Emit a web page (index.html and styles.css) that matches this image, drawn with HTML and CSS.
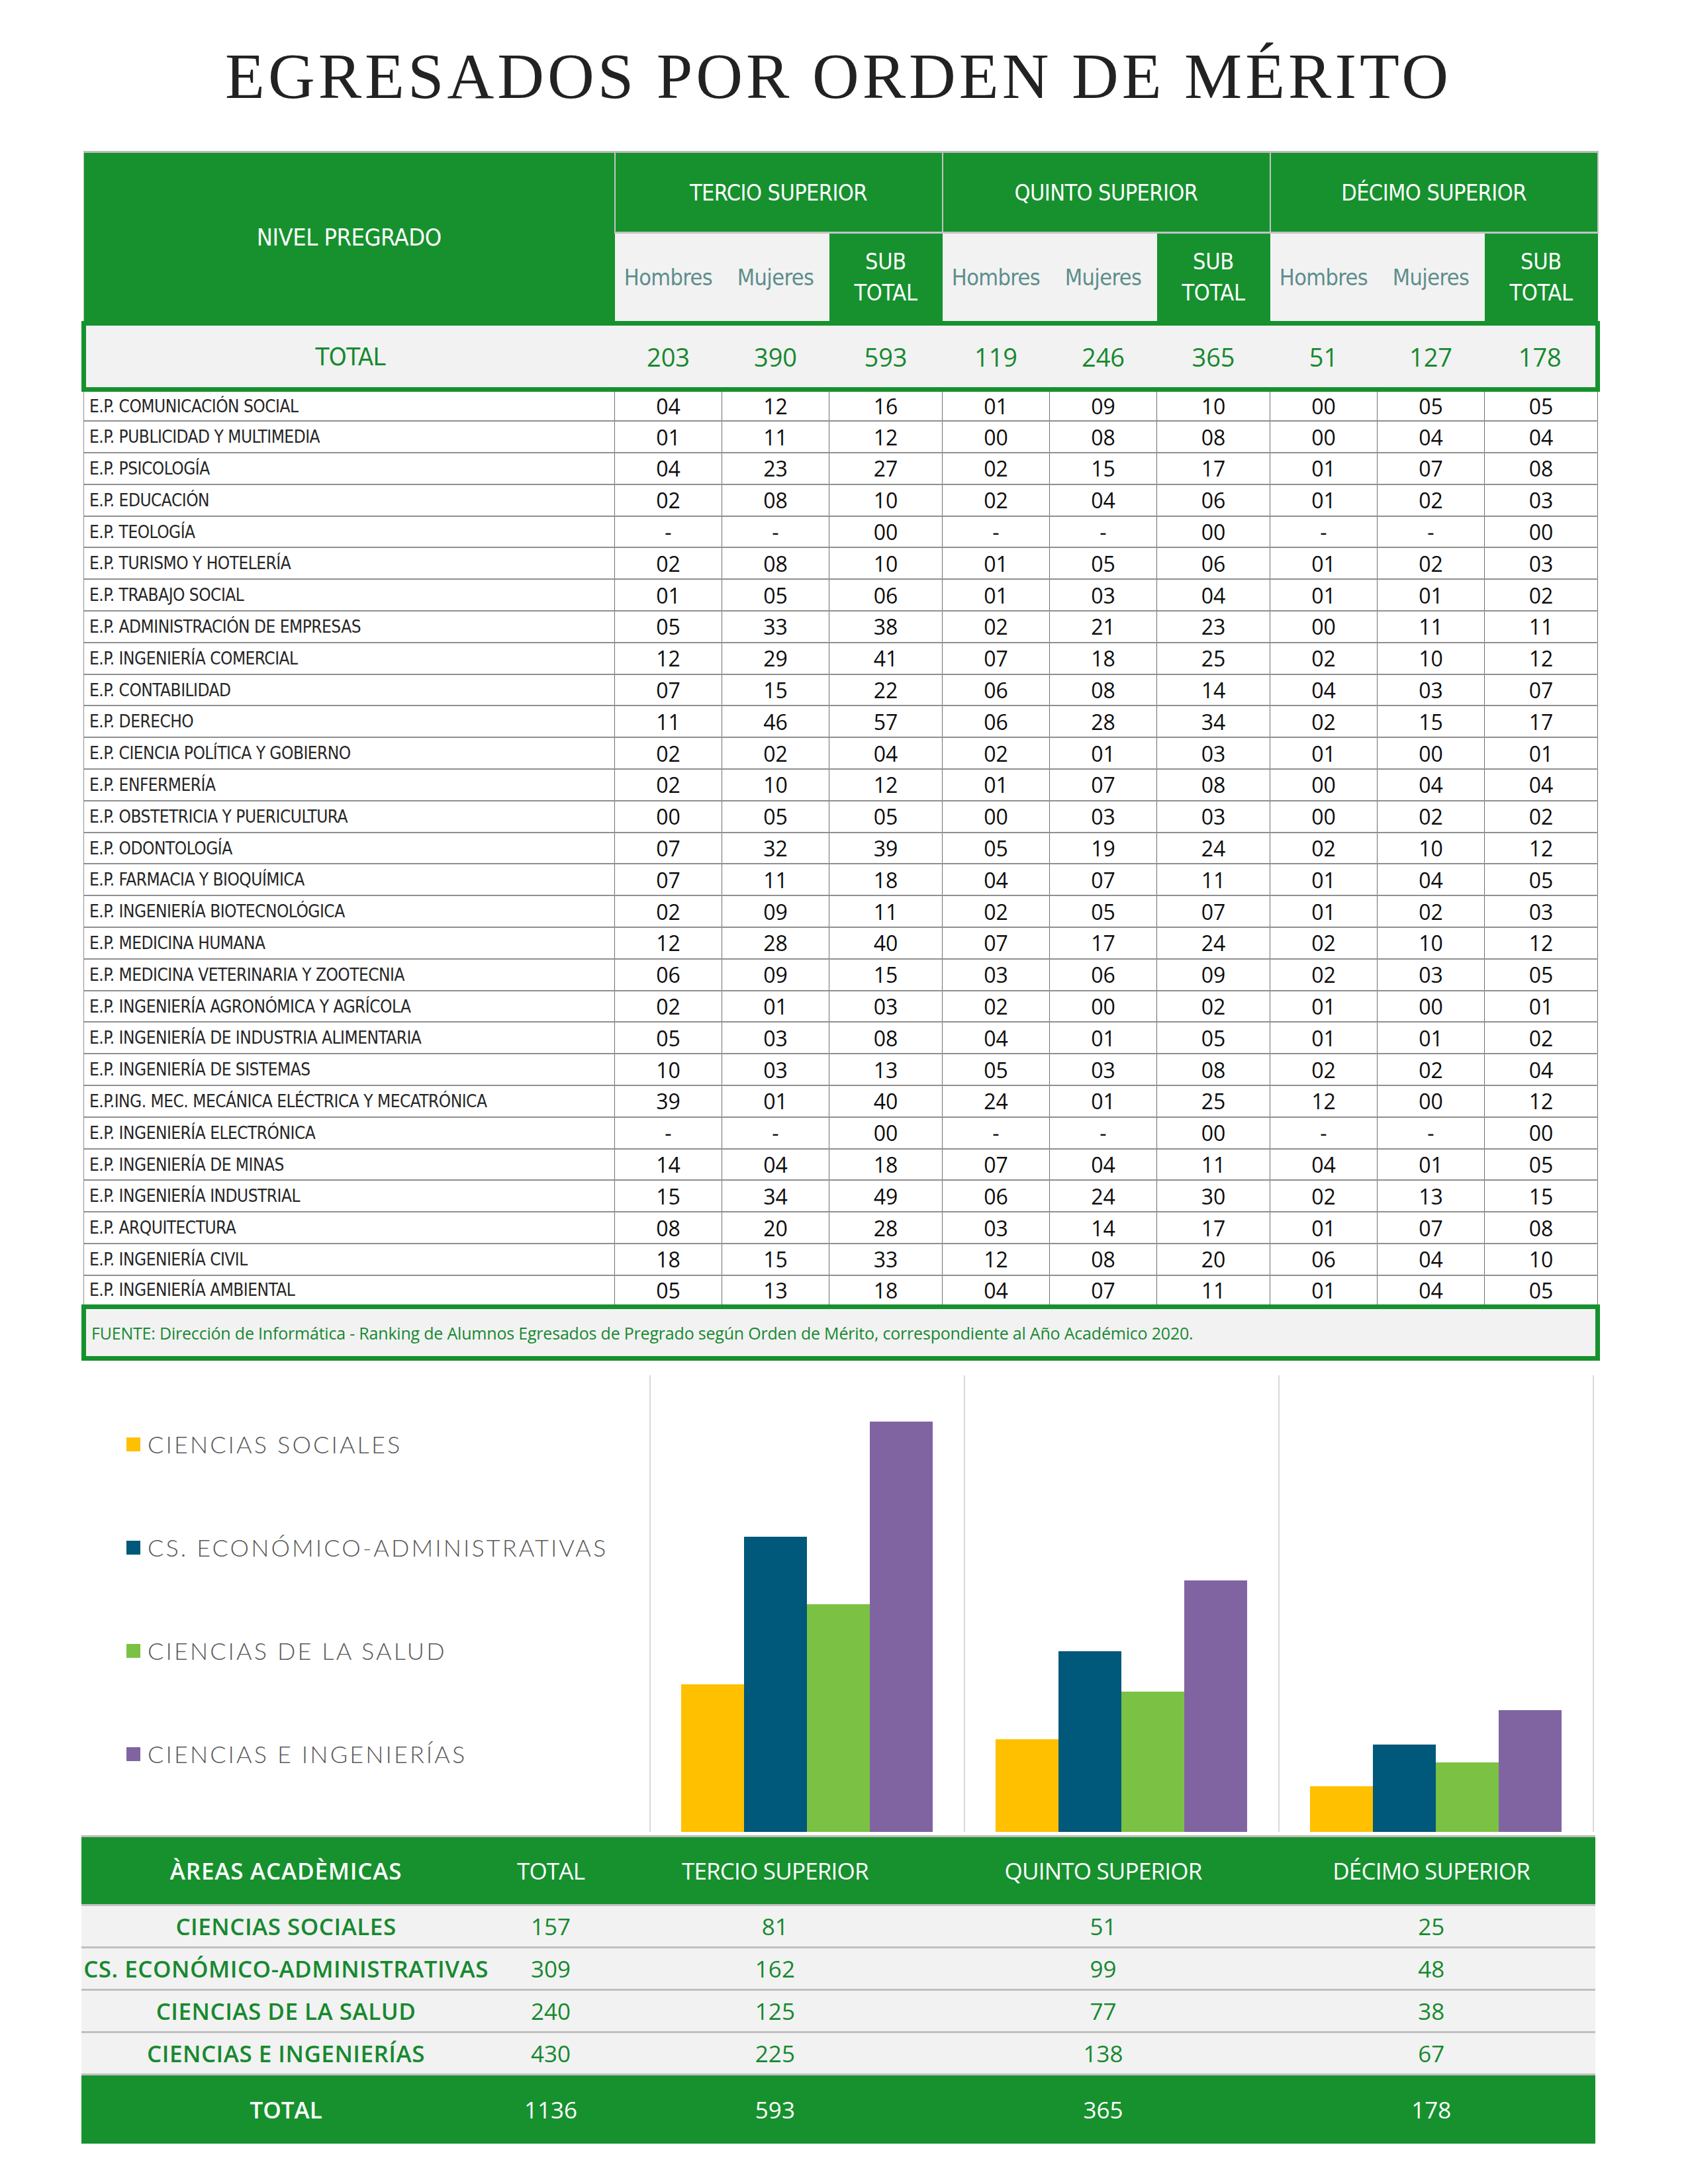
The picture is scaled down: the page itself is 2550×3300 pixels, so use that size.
FILE: index.html
```html
<!DOCTYPE html>
<html lang="es">
<head>
<meta charset="utf-8">
<title>Egresados por orden de mérito</title>
<link rel="stylesheet" href="styles.css">
</head>
<body>
<div class="page">
  <h1 class="title">EGRESADOS POR ORDEN DE MÉRITO</h1>

  <table class="main">
    <colgroup>
      <col class="c-name">
      <col class="c-n"><col class="c-n"><col class="c-st">
      <col class="c-n"><col class="c-n"><col class="c-st">
      <col class="c-n"><col class="c-n"><col class="c-st">
    </colgroup>
    <thead>
      <tr class="h1">
        <th class="nivel" rowspan="2">NIVEL PREGRADO</th>
        <th class="grp" colspan="3">TERCIO SUPERIOR</th>
        <th class="grp" colspan="3">QUINTO SUPERIOR</th>
        <th class="grp" colspan="3">DÉCIMO SUPERIOR</th>
      </tr>
      <tr class="h2">
        <th class="sex">Hombres</th><th class="sex">Mujeres</th><th class="sub">SUB<br>TOTAL</th>
        <th class="sex">Hombres</th><th class="sex">Mujeres</th><th class="sub">SUB<br>TOTAL</th>
        <th class="sex">Hombres</th><th class="sex">Mujeres</th><th class="sub">SUB<br>TOTAL</th>
      </tr>
    </thead>
    <tbody>
      <tr class="total">
        <td class="tlabel">TOTAL</td>
        <td>203</td><td>390</td><td>593</td>
        <td>119</td><td>246</td><td>365</td>
        <td>51</td><td>127</td><td class="last">178</td>
      </tr>
      <tr><td class="name">E.P. COMUNICACIÓN SOCIAL</td><td>04</td><td>12</td><td>16</td><td>01</td><td>09</td><td>10</td><td>00</td><td>05</td><td>05</td></tr>
      <tr><td class="name">E.P. PUBLICIDAD Y MULTIMEDIA</td><td>01</td><td>11</td><td>12</td><td>00</td><td>08</td><td>08</td><td>00</td><td>04</td><td>04</td></tr>
      <tr><td class="name">E.P. PSICOLOGÍA</td><td>04</td><td>23</td><td>27</td><td>02</td><td>15</td><td>17</td><td>01</td><td>07</td><td>08</td></tr>
      <tr><td class="name">E.P. EDUCACIÓN</td><td>02</td><td>08</td><td>10</td><td>02</td><td>04</td><td>06</td><td>01</td><td>02</td><td>03</td></tr>
      <tr><td class="name">E.P. TEOLOGÍA</td><td>-</td><td>-</td><td>00</td><td>-</td><td>-</td><td>00</td><td>-</td><td>-</td><td>00</td></tr>
      <tr><td class="name">E.P. TURISMO Y HOTELERÍA</td><td>02</td><td>08</td><td>10</td><td>01</td><td>05</td><td>06</td><td>01</td><td>02</td><td>03</td></tr>
      <tr><td class="name">E.P. TRABAJO SOCIAL</td><td>01</td><td>05</td><td>06</td><td>01</td><td>03</td><td>04</td><td>01</td><td>01</td><td>02</td></tr>
      <tr><td class="name">E.P. ADMINISTRACIÓN DE EMPRESAS</td><td>05</td><td>33</td><td>38</td><td>02</td><td>21</td><td>23</td><td>00</td><td>11</td><td>11</td></tr>
      <tr><td class="name">E.P. INGENIERÍA COMERCIAL</td><td>12</td><td>29</td><td>41</td><td>07</td><td>18</td><td>25</td><td>02</td><td>10</td><td>12</td></tr>
      <tr><td class="name">E.P. CONTABILIDAD</td><td>07</td><td>15</td><td>22</td><td>06</td><td>08</td><td>14</td><td>04</td><td>03</td><td>07</td></tr>
      <tr><td class="name">E.P. DERECHO</td><td>11</td><td>46</td><td>57</td><td>06</td><td>28</td><td>34</td><td>02</td><td>15</td><td>17</td></tr>
      <tr><td class="name">E.P. CIENCIA POLÍTICA Y GOBIERNO</td><td>02</td><td>02</td><td>04</td><td>02</td><td>01</td><td>03</td><td>01</td><td>00</td><td>01</td></tr>
      <tr><td class="name">E.P. ENFERMERÍA</td><td>02</td><td>10</td><td>12</td><td>01</td><td>07</td><td>08</td><td>00</td><td>04</td><td>04</td></tr>
      <tr><td class="name">E.P. OBSTETRICIA Y PUERICULTURA</td><td>00</td><td>05</td><td>05</td><td>00</td><td>03</td><td>03</td><td>00</td><td>02</td><td>02</td></tr>
      <tr><td class="name">E.P. ODONTOLOGÍA</td><td>07</td><td>32</td><td>39</td><td>05</td><td>19</td><td>24</td><td>02</td><td>10</td><td>12</td></tr>
      <tr><td class="name">E.P. FARMACIA Y BIOQUÍMICA</td><td>07</td><td>11</td><td>18</td><td>04</td><td>07</td><td>11</td><td>01</td><td>04</td><td>05</td></tr>
      <tr><td class="name">E.P. INGENIERÍA BIOTECNOLÓGICA</td><td>02</td><td>09</td><td>11</td><td>02</td><td>05</td><td>07</td><td>01</td><td>02</td><td>03</td></tr>
      <tr><td class="name">E.P. MEDICINA HUMANA</td><td>12</td><td>28</td><td>40</td><td>07</td><td>17</td><td>24</td><td>02</td><td>10</td><td>12</td></tr>
      <tr><td class="name">E.P. MEDICINA VETERINARIA Y ZOOTECNIA</td><td>06</td><td>09</td><td>15</td><td>03</td><td>06</td><td>09</td><td>02</td><td>03</td><td>05</td></tr>
      <tr><td class="name">E.P. INGENIERÍA AGRONÓMICA Y AGRÍCOLA</td><td>02</td><td>01</td><td>03</td><td>02</td><td>00</td><td>02</td><td>01</td><td>00</td><td>01</td></tr>
      <tr><td class="name">E.P. INGENIERÍA DE INDUSTRIA ALIMENTARIA</td><td>05</td><td>03</td><td>08</td><td>04</td><td>01</td><td>05</td><td>01</td><td>01</td><td>02</td></tr>
      <tr><td class="name">E.P. INGENIERÍA DE SISTEMAS</td><td>10</td><td>03</td><td>13</td><td>05</td><td>03</td><td>08</td><td>02</td><td>02</td><td>04</td></tr>
      <tr><td class="name">E.P.ING. MEC. MECÁNICA ELÉCTRICA Y MECATRÓNICA</td><td>39</td><td>01</td><td>40</td><td>24</td><td>01</td><td>25</td><td>12</td><td>00</td><td>12</td></tr>
      <tr><td class="name">E.P. INGENIERÍA ELECTRÓNICA</td><td>-</td><td>-</td><td>00</td><td>-</td><td>-</td><td>00</td><td>-</td><td>-</td><td>00</td></tr>
      <tr><td class="name">E.P. INGENIERÍA DE MINAS</td><td>14</td><td>04</td><td>18</td><td>07</td><td>04</td><td>11</td><td>04</td><td>01</td><td>05</td></tr>
      <tr><td class="name">E.P. INGENIERÍA INDUSTRIAL</td><td>15</td><td>34</td><td>49</td><td>06</td><td>24</td><td>30</td><td>02</td><td>13</td><td>15</td></tr>
      <tr><td class="name">E.P. ARQUITECTURA</td><td>08</td><td>20</td><td>28</td><td>03</td><td>14</td><td>17</td><td>01</td><td>07</td><td>08</td></tr>
      <tr><td class="name">E.P. INGENIERÍA CIVIL</td><td>18</td><td>15</td><td>33</td><td>12</td><td>08</td><td>20</td><td>06</td><td>04</td><td>10</td></tr>
      <tr><td class="name">E.P. INGENIERÍA AMBIENTAL</td><td>05</td><td>13</td><td>18</td><td>04</td><td>07</td><td>11</td><td>01</td><td>04</td><td>05</td></tr>
      <tr class="source">
        <td colspan="10">FUENTE: Dirección de Informática - Ranking de Alumnos Egresados de Pregrado según Orden de Mérito, correspondiente al Año Académico 2020.</td>
      </tr>
    </tbody>
  </table>

  <section class="chart">
    <ul class="legend">
      <li><span class="sw sw-soc"></span>CIENCIAS SOCIALES</li>
      <li><span class="sw sw-eco"></span>CS. ECONÓMICO-ADMINISTRATIVAS</li>
      <li><span class="sw sw-sal"></span>CIENCIAS DE LA SALUD</li>
      <li><span class="sw sw-ing"></span>CIENCIAS E INGENIERÍAS</li>
    </ul>
    <div class="plot">
      <div class="panel">
        <div class="bar sw-soc" style="height:223.2px"></div>
        <div class="bar sw-eco" style="height:446.5px"></div>
        <div class="bar sw-sal" style="height:344.5px"></div>
        <div class="bar sw-ing" style="height:620.1px"></div>
      </div>
      <div class="panel">
        <div class="bar sw-soc" style="height:140.6px"></div>
        <div class="bar sw-eco" style="height:272.8px"></div>
        <div class="bar sw-sal" style="height:212.2px"></div>
        <div class="bar sw-ing" style="height:380.3px"></div>
      </div>
      <div class="panel">
        <div class="bar sw-soc" style="height:68.9px"></div>
        <div class="bar sw-eco" style="height:132.3px"></div>
        <div class="bar sw-sal" style="height:104.7px"></div>
        <div class="bar sw-ing" style="height:184.6px"></div>
      </div>
    </div>
  </section>

  <table class="areas">
    <colgroup>
      <col class="a-name"><col class="a-tot"><col class="a-g"><col class="a-g"><col class="a-g">
    </colgroup>
    <thead>
      <tr>
        <th class="aname">ÀREAS ACADÈMICAS</th>
        <th>TOTAL</th>
        <th>TERCIO SUPERIOR</th>
        <th>QUINTO SUPERIOR</th>
        <th>DÉCIMO SUPERIOR</th>
      </tr>
    </thead>
    <tbody>
      <tr><td class="aname">CIENCIAS SOCIALES</td><td>157</td><td>81</td><td>51</td><td>25</td></tr>
      <tr><td class="aname">CS. ECONÓMICO-ADMINISTRATIVAS</td><td>309</td><td>162</td><td>99</td><td>48</td></tr>
      <tr><td class="aname">CIENCIAS DE LA SALUD</td><td>240</td><td>125</td><td>77</td><td>38</td></tr>
      <tr><td class="aname">CIENCIAS E INGENIERÍAS</td><td>430</td><td>225</td><td>138</td><td>67</td></tr>
    </tbody>
    <tfoot>
      <tr><td class="aname">TOTAL</td><td>1136</td><td>593</td><td>365</td><td>178</td></tr>
    </tfoot>
  </table>
</div>
</body>
</html>
```

FILE: styles.css
```css
* { box-sizing: border-box; }

body {
  margin: 0;
  background: #ffffff;
  font-family: "Open Sans", "Liberation Sans", sans-serif;
  color: #111;
}

.page {
  width: 2287px;
  margin-left: 123px;
  padding-top: 66px;
}

.title {
  margin: 0 0 64px;
  font-family: "Liberation Serif", "Times New Roman", serif;
  font-weight: 400;
  font-size: 98px;
  line-height: 98px;
  letter-spacing: 5px;
  text-align: center;
  color: #222222;
}

/* ---------- main table ---------- */
.main {
  width: 2287px;
  table-layout: fixed;
  border-collapse: collapse;
}
.c-name { width: 802px; }
.c-n { width: 162px; }
.c-st { width: 171px; }

.main th {
  font-family: "Liberation Sans Narrow", "DejaVu Sans Condensed", "Liberation Sans", sans-serif;
  font-weight: 400;
  padding: 0;
  text-align: center;
}

.h1 { height: 122px; }
.h2 { height: 137px; }

.nivel {
  background: #16912e;
  color: #fff;
  font-size: 36px;
  border-top: 3px solid #bdbdbd;
  border-left: 1px solid #bdbdbd;
  letter-spacing: -0.5px;
}
.grp {
  background: #16912e;
  color: #fff;
  font-size: 34px;
  border-top: 3px solid #bdbdbd;
  border-left: 2px solid #c4c4c4;
  border-right: 2px solid #c4c4c4;
  border-bottom: 3px solid #c4c4c4;
  letter-spacing: -0.6px;
}
.sex {
  background: #f2f2f2;
  color: #5d8e8c;
  font-size: 34px;
  letter-spacing: -0.6px;
}
.sub {
  background: #16912e;
  color: #fff;
  font-size: 34px;
  line-height: 47px;
  letter-spacing: -0.3px;
}

.main td {
  padding: 0;
  text-align: center;
  font-size: 32px;
  color: #0d0d0d;
  border-right: 1px solid #6f6f6f;
  border-bottom: 2px solid #8f8f8f;
  height: 47.8px;
  white-space: nowrap;
  overflow: hidden;
}
.main td.name {
  text-align: left;
  padding-left: 8px;
  font-family: "Liberation Sans Narrow", "DejaVu Sans Condensed", "Liberation Sans", sans-serif;
  font-size: 26px;
  color: #262626;
  letter-spacing: -0.5px;
  border-left: 1px solid #8f8f8f;
}

.main tr.total td {
  height: 100px;
  background: #f2f2f2;
  color: #17892f;
  font-size: 38px;
  border-top: 7px solid #16912e;
  border-bottom: 7px solid #16912e;
  border-right: none;
}
.main tr.total td.tlabel {
  font-family: "Liberation Sans Narrow", "DejaVu Sans Condensed", "Liberation Sans", sans-serif;
  border-left: 7px solid #16912e;
  letter-spacing: -0.5px;
}
.main tr.total td.last { border-right: 7px solid #16912e; }

.main tr.source td {
  height: 78px;
  background: #f2f2f2;
  border: 7px solid #16912e;
  text-align: left;
  padding-left: 8px;
  color: #17892f;
  font-size: 25px;
  letter-spacing: -0.2px;
}

/* ---------- chart ---------- */
.chart {
  display: flex;
  height: 717px;
  padding: 22px 0 5px;
}
.legend {
  width: 858px;
  margin: 0;
  padding: 26px 0 0 68px;
  list-style: none;
  font-family: "Lato", "Open Sans", sans-serif;
  font-weight: 300;
  font-size: 36px;
  letter-spacing: 3.1px;
  color: #595959;
}
.legend li {
  display: flex;
  align-items: center;
  gap: 11px;
  height: 156px;
}
.sw {
  display: inline-block;
  width: 21px;
  height: 21px;
  flex: none;
}
.sw-soc { background: #ffc000; }
.sw-eco { background: #00587a; }
.sw-sal { background: #7bc143; }
.sw-ing { background: #8064a2; }

.plot {
  display: flex;
  border-left: 2px solid #d9d9d9;
  height: 690px;
}
.panel {
  width: 475px;
  display: flex;
  align-items: flex-end;
  padding: 0 46px;
  border-right: 2px solid #d9d9d9;
}
.bar { width: 95px; }

/* ---------- areas table ---------- */
.areas {
  width: 2287px;
  table-layout: fixed;
  border-collapse: collapse;
}
.a-name { width: 618px; }
.a-tot { width: 182px; }
.a-g { width: 495.6px; }

.areas th {
  height: 104px;
  padding: 0;
  background: #16912e;
  color: #fff;
  font-weight: 400;
  font-size: 35px;
  letter-spacing: -0.8px;
  border-top: 3px solid #bdbdbd;
  text-align: center;
}
.areas th.aname { font-weight: 600; letter-spacing: 0.8px; }

.areas tbody td {
  height: 64px;
  padding: 0;
  background: #f2f2f2;
  color: #17892f;
  font-size: 35px;
  text-align: center;
  border-top: 3px solid #c0c0c0;
  white-space: nowrap;
}
.areas tbody td.aname { font-weight: 600; letter-spacing: 0.5px; }

.areas tfoot td {
  height: 104px;
  padding: 0;
  background: #16912e;
  color: #fff;
  font-size: 35px;
  text-align: center;
  border-top: 3px solid #c0c0c0;
}
.areas tfoot td.aname { font-weight: 600; }
```
